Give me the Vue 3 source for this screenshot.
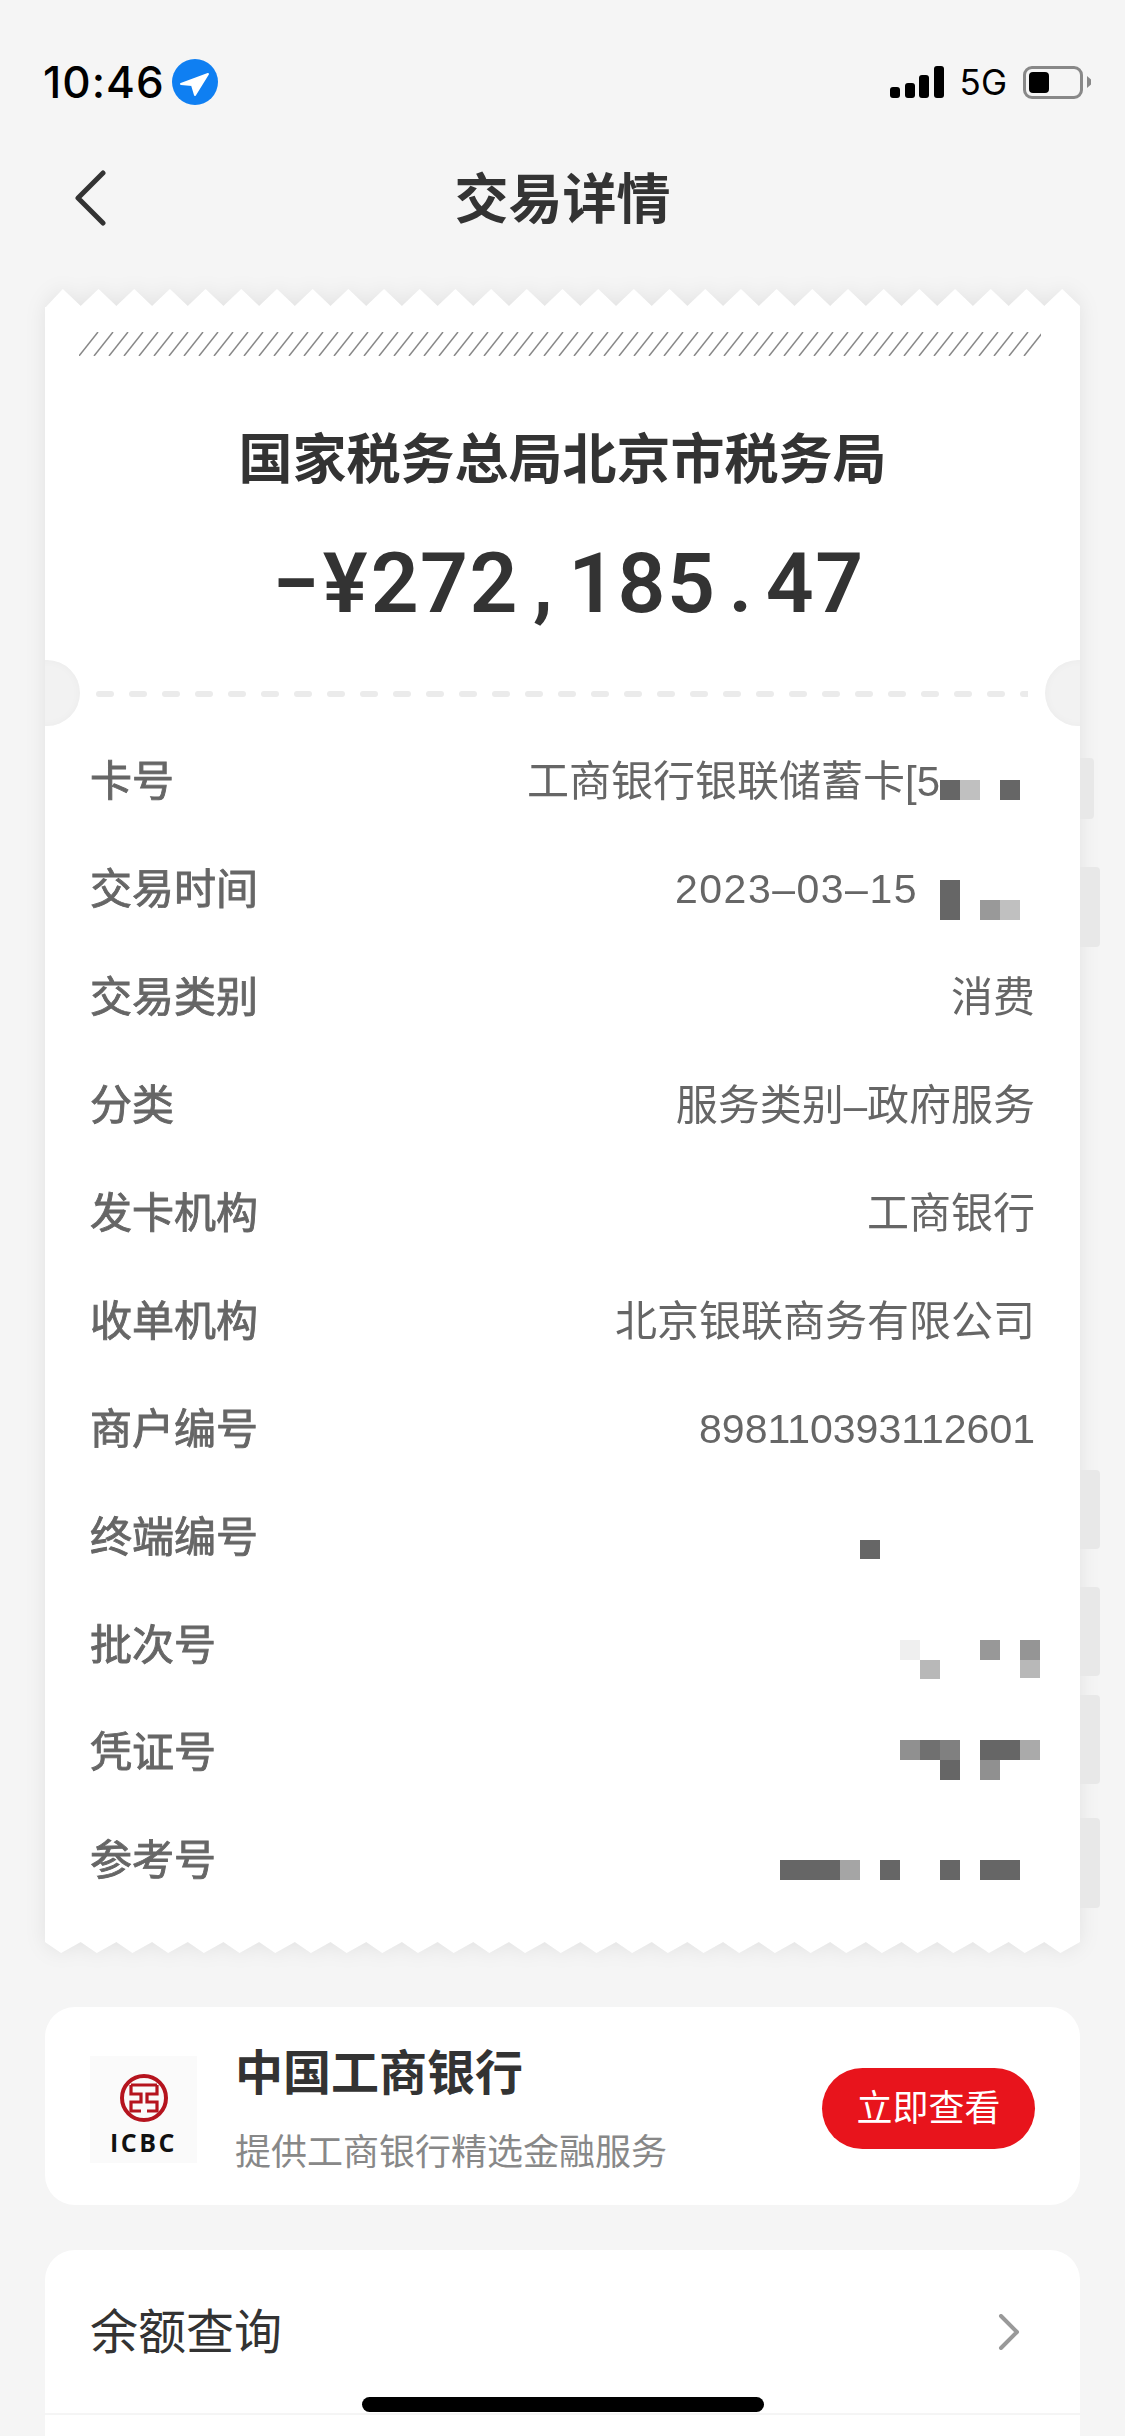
<script setup>
const rows = [
  { label: "卡号", value: "工商银行银联储蓄卡[5", pad: 95 },
  { label: "交易时间", value: "2023–03–15", pad: 117, kind: "date" },
  { label: "交易类别", value: "消费" },
  { label: "分类", value: "服务类别–政府服务" },
  { label: "发卡机构", value: "工商银行" },
  { label: "收单机构", value: "北京银联商务有限公司" },
  { label: "商户编号", value: "898110393112601", kind: "num" },
  { label: "终端编号", value: "" },
  { label: "批次号", value: "" },
  { label: "凭证号", value: "" },
  { label: "参考号", value: "" },
];

const amount = "−¥272,185.47".split("");

// screen coordinates of the mosaic over the blurred numbers
const mosaic = [
  [940, 780, 20, 20, "#666"],
  [960, 780, 20, 20, "#c0c0c0"],
  [1000, 780, 20, 20, "#666"],
  [940, 880, 20, 40, "#666"],
  [980, 900, 20, 20, "#999"],
  [1000, 900, 20, 20, "#c0c0c0"],
  [860, 1540, 20, 19, "#666"],
  [900, 1640, 20, 20, "#efefef"],
  [920, 1660, 20, 19, "#b8b8b8"],
  [980, 1640, 20, 20, "#989898"],
  [1020, 1640, 20, 20, "#959595"],
  [1020, 1660, 20, 18, "#b8b8b8"],
  [900, 1740, 20, 20, "#909090"],
  [920, 1740, 20, 20, "#707070"],
  [940, 1740, 20, 20, "#808080"],
  [940, 1760, 20, 20, "#666"],
  [980, 1740, 40, 20, "#666"],
  [1020, 1740, 20, 20, "#aaa"],
  [980, 1760, 20, 20, "#909090"],
  [780, 1860, 60, 20, "#666"],
  [840, 1860, 20, 20, "#a5a5a5"],
  [880, 1860, 20, 20, "#666"],
  [940, 1860, 20, 20, "#666"],
  [980, 1860, 40, 20, "#666"],
];

// faint slivers of the screen behind, showing right of the ticket
const ghosts = [
  [758, 61, 14],
  [867, 80, 20],
  [1470, 79, 20],
  [1587, 89, 20],
  [1695, 89, 20],
  [1818, 90, 20],
];

const toothW = 1035 / 29;
const topTeeth = (() => {
  let pts = "0,19";
  for (let i = 0; i < 29; i++) {
    pts += ` ${(i + 0.5) * toothW},0 ${(i + 1) * toothW},17`;
  }
  return pts + " 1035,19";
})();
const bottomTeeth = (() => {
  let pts = "0,0";
  for (let i = 0; i < 29; i++) {
    pts += ` ${(i + 0.45) * toothW},11 ${(i + 1) * toothW},0`;
  }
  return pts;
})();
</script>

<template>
  <div class="page">
    <div class="status">
      <div class="status-left">
        <span class="time">10:46</span>
        <svg class="loc" width="46" height="46" viewBox="-23 -23 46 46">
          <circle r="23" fill="#0f7ff2" />
          <path d="M13 -8 L-14 2 L-3 3 L0 13 Z" fill="#fff" stroke="#fff" stroke-width="2" stroke-linejoin="round" />
        </svg>
      </div>
      <div class="status-right">
        <div class="signal">
          <i style="height: 11px"></i>
          <i style="height: 15px"></i>
          <i style="height: 23px"></i>
          <i style="height: 32px"></i>
        </div>
        <span class="net">5G</span>
        <div class="battery"><i></i></div>
        <div class="nub"></div>
      </div>
    </div>

    <div class="nav">
      <svg class="back" width="34" height="56" viewBox="0 0 34 56">
        <path d="M30 3 L5 28 L30 53" fill="none" stroke="#333" stroke-width="5" stroke-linecap="round" stroke-linejoin="round" />
      </svg>
      <div class="nav-title">交易详情</div>
    </div>

    <div class="ticket">
      <svg class="teeth-top" width="1035" height="19" viewBox="0 0 1035 19">
        <polygon :points="topTeeth" fill="#fff" />
      </svg>
      <div class="ticket-body">
        <svg class="hatch" width="962" height="24" viewBox="0 0 962 24">
          <g stroke="#888" stroke-width="1.5">
            <line v-for="n in 64" :key="n" :x1="(n - 1) * 15" y1="24" :x2="(n - 1) * 15 + 19" y2="0" />
          </g>
        </svg>
        <div class="merchant">国家税务总局北京市税务局</div>
        <div class="amount">
          <span v-for="(ch, i) in amount" :key="i" class="amount-ch">{{ ch }}</span>
        </div>
        <svg class="tear" width="932" height="6" viewBox="0 0 932 6">
          <line x1="3" y1="3" x2="932" y2="3" stroke="#ebebeb" stroke-width="6" stroke-linecap="round" stroke-dasharray="12 21" />
        </svg>
        <span class="notch notch-left"></span>
        <span class="notch notch-right"></span>

        <div class="rows">
          <div v-for="row in rows" :key="row.label" class="row">
            <span class="row-label">{{ row.label }}</span>
            <span
              class="row-value"
              :class="row.kind"
              :style="{ marginRight: (row.pad || 0) + 'px' }"
            >{{ row.value }}</span>
          </div>
        </div>

        <i
          v-for="(m, i) in mosaic"
          :key="i"
          class="cell"
          :style="{ left: m[0] - 45 + 'px', top: m[1] - 307 + 'px', width: m[2] + 'px', height: m[3] + 'px', background: m[4] }"
        ></i>
      </div>
      <svg class="teeth-bottom" width="1035" height="11" viewBox="0 0 1035 11">
        <polygon :points="bottomTeeth" fill="#fff" />
      </svg>
    </div>

    <i
      v-for="(g, i) in ghosts"
      :key="i"
      class="ghost"
      :style="{ top: g[0] + 'px', height: g[1] + 'px', width: g[2] + 'px' }"
    ></i>

    <div class="bank card">
      <div class="bank-logo">
        <svg width="50" height="50" viewBox="-25 -25 50 50">
          <circle r="22" fill="none" stroke="#b5141e" stroke-width="4" />
          <path
            d="M-13 -13 H13 M-13 -13 V-4 H-3 V4 H-13 V13 H-3 M13 -13 V-4 H3 V4 H13 V13 H3"
            fill="none"
            stroke="#b5141e"
            stroke-width="3.2"
          />
        </svg>
        <span class="bank-logo-text">ICBC</span>
      </div>
      <div class="bank-info">
        <div class="bank-name">中国工商银行</div>
        <div class="bank-sub">提供工商银行精选金融服务</div>
      </div>
      <div class="bank-btn">立即查看</div>
    </div>

    <div class="menu card">
      <div class="menu-row">
        <span class="menu-label">余额查询</span>
        <svg width="22" height="36" viewBox="0 0 22 36">
          <path d="M3 2 L19 18 L3 34" fill="none" stroke="#999" stroke-width="4" stroke-linecap="round" stroke-linejoin="round" />
        </svg>
      </div>
      <div class="menu-row-next"></div>
    </div>

    <div class="home-bar"></div>
  </div>
</template>

<style scoped>
.page {
  position: relative;
  width: 1125px;
  height: 2436px;
  overflow: hidden;
  background: #f5f5f5;
  font-family: "Liberation Sans", "Noto Sans CJK SC", sans-serif;
  color: #333;
}

.status {
  display: flex;
  justify-content: space-between;
  align-items: center;
  box-sizing: border-box;
  height: 140px;
  padding: 24px 34px 0 43px;
}

.status-left {
  display: flex;
  align-items: center;
  gap: 7px;
}

.time {
  font-family: Inter, sans-serif;
  font-size: 44px;
  font-weight: 500;
  letter-spacing: 1px;
  color: #000;
}

.status-right {
  display: flex;
  align-items: center;
}

.signal {
  display: flex;
  align-items: flex-end;
  gap: 4.5px;
  height: 32px;
  margin-right: 16px;
}

.signal i {
  display: block;
  width: 10px;
  border-radius: 3px;
  background: #000;
}

.net {
  font-family: Inter, sans-serif;
  font-size: 35px;
  color: #000;
  margin-right: 16px;
}

.battery {
  box-sizing: border-box;
  width: 60px;
  height: 33px;
  padding: 3px;
  border: 3.5px solid #888;
  border-radius: 9px;
}

.battery i {
  display: block;
  width: 20px;
  height: 100%;
  border-radius: 4px;
  background: #000;
}

.nub {
  width: 4px;
  height: 12px;
  margin-left: 4px;
  background: #888;
  clip-path: polygon(0 0, 100% 30%, 100% 70%, 0 100%);
}

.nav {
  position: relative;
  display: flex;
  align-items: center;
  justify-content: center;
  height: 116px;
}

.back {
  position: absolute;
  left: 73px;
  top: 30px;
}

.nav-title {
  margin-bottom: 5px;
  font-size: 54px;
  font-weight: 700;
}

.ticket {
  position: relative;
  width: 1035px;
  margin: 33px 45px 0;
  filter: drop-shadow(0 0 10px rgba(0, 0, 0, 0.08));
}

.teeth-top,
.teeth-bottom {
  display: block;
}

.teeth-top {
  margin-bottom: -1px;
}

.ticket-body {
  position: relative;
  height: 1635px;
  padding-top: 25px;
  box-sizing: border-box;
  overflow: hidden;
  background: #fff;
}

.hatch {
  display: block;
  margin-left: 34px;
}

.merchant {
  margin-top: 64px;
  font-size: 54px;
  line-height: 80px;
  font-weight: 700;
  text-align: center;
}

.amount {
  display: flex;
  justify-content: center;
  margin: 34px 0 0 10px;
  font-family: Roboto, sans-serif;
  font-size: 84px;
  line-height: 100px;
  font-weight: 600;
}

.amount-ch {
  width: 49.4px;
  text-align: center;
}

.tear {
  display: block;
  margin: 57px 0 0 51px;
}

.notch {
  position: absolute;
  top: 353px;
  width: 66px;
  height: 66px;
  border-radius: 50%;
  background: #f2f2f2;
  box-shadow: inset 0 0 10px rgba(0, 0, 0, 0.03);
}

.notch-left {
  left: -31px;
}

.notch-right {
  right: -31px;
}

.rows {
  margin-top: 27px;
}

.row {
  display: flex;
  justify-content: space-between;
  align-items: center;
  height: 107.9px;
  padding: 0 45px;
  font-size: 42px;
  color: #666;
}

.row-label {
  -webkit-text-stroke: 0.9px #666;
}

.row-value.num {
  margin-top: 8px;
  font-size: 41px;
}

.row-value.date {
  margin-top: 8px;
  font-size: 41px;
  letter-spacing: 1.5px;
}

.cell {
  position: absolute;
  display: block;
}

.ghost {
  position: absolute;
  left: 1080px;
  display: block;
  background: #e8e8e8;
  border-radius: 0 4px 4px 0;
}

.card {
  width: 1035px;
  margin-left: 45px;
  background: #fff;
}

.bank {
  display: flex;
  align-items: center;
  box-sizing: border-box;
  height: 198px;
  margin-top: 54px;
  padding: 0 45px;
  border-radius: 30px;
}

.bank-logo {
  display: flex;
  flex-direction: column;
  align-items: center;
  box-sizing: border-box;
  width: 107px;
  height: 107px;
  margin-top: 6px;
  padding-top: 17px;
  background: #fafafa;
}

.bank-logo svg {
  display: block;
}

.bank-logo-text {
  margin-top: 4px;
  font-family: "Open Sans", sans-serif;
  font-size: 25px;
  line-height: 30px;
  font-weight: 700;
  letter-spacing: 2.5px;
  color: #111;
}

.bank-info {
  flex: 1;
  margin: 6px 0 0 38px;
}

.bank-name {
  font-size: 48px;
  line-height: 66px;
  font-weight: 700;
}

.bank-sub {
  margin-top: 21px;
  font-size: 36px;
  line-height: 50px;
  color: #888;
}

.bank-btn {
  width: 213px;
  height: 81px;
  margin-top: 4px;
  border-radius: 41px;
  background: #e8141c;
  color: #fff;
  font-size: 36px;
  line-height: 81px;
  text-align: center;
}

.menu {
  margin-top: 45px;
  border-radius: 30px 30px 0 0;
}

.menu-row {
  display: flex;
  justify-content: space-between;
  align-items: center;
  box-sizing: border-box;
  height: 165px;
  padding: 0 60px 0 45px;
  border-bottom: 2px solid #f5f5f5;
  font-size: 48px;
}

.menu-label {
  margin-bottom: 8px;
}

.menu-row-next {
  height: 100px;
}

.home-bar {
  position: absolute;
  left: 362px;
  top: 2397px;
  width: 402px;
  height: 15px;
  border-radius: 8px;
  background: #000;
}
</style>
